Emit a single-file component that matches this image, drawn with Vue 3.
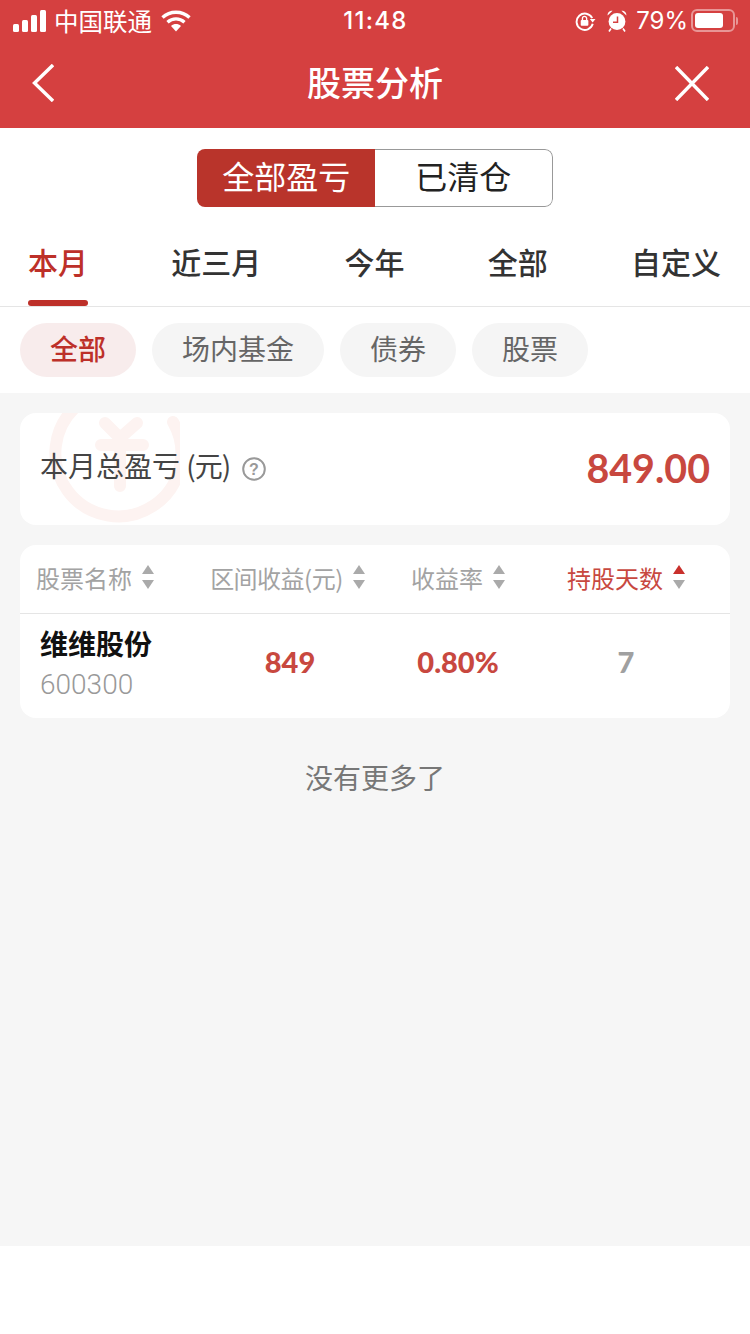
<template>
  <div class="page">
    <header class="top">
      <div class="status">
        <div class="status-left">
          <svg class="signal" width="33" height="22" viewBox="0 0 33 22">
            <rect x="0" y="14" width="6" height="8" rx="1.5" />
            <rect x="9" y="10" width="6" height="12" rx="1.5" />
            <rect x="18" y="5" width="6" height="17" rx="1.5" />
            <rect x="27" y="0" width="6" height="22" rx="1.5" />
          </svg>
          <span class="carrier">中国联通</span>
          <svg class="wifi" width="30" height="22" viewBox="0 0 30 22">
            <path d="M1.5 7.5C9 .5 21 .5 28.5 7.5" fill="none" stroke="#fff" stroke-width="3.4" />
            <path d="M6.5 12.2C11.5 7.8 18.5 7.8 23.5 12.2" fill="none" stroke="#fff" stroke-width="3.4" />
            <path d="M10 16c3-2.6 7-2.6 10 0l-5 5.6z" fill="#fff" />
          </svg>
        </div>
        <span class="time">11:48</span>
        <div class="status-right">
          <svg class="lock" width="21" height="20" viewBox="0 0 22 20">
            <path d="M18 7A8.6 8.6 0 1 0 18.6 13" fill="none" stroke="#fff" stroke-width="2" />
            <path d="M15.5 8h6l-3 3.6z" fill="#fff" />
            <rect x="6" y="9" width="8" height="6" rx="1" fill="#fff" />
            <path d="M7.8 9V7.4a2.2 2.2 0 0 1 4.4 0V9" fill="none" stroke="#fff" stroke-width="1.4" />
          </svg>
          <svg class="alarm" width="20" height="22" viewBox="0 0 20 22">
            <circle cx="10" cy="11.5" r="8.4" fill="#fff" />
            <path d="M10.5 6.5v5.8H6" fill="none" stroke="#d54040" stroke-width="1.5" />
            <path d="M.6 5.6C.4 2.6 2.6.6 5.6.8zM19.4 5.6C19.6 2.6 17.4.6 14.4.8z" fill="#fff" />
            <path d="M4 18.5l-2 3M16 18.5l2 3" fill="none" stroke="#fff" stroke-width="1.6" />
          </svg>
          <span class="percent">79%</span>
          <div class="battery"><div class="battery-fill"></div></div>
          <div class="battery-nub"></div>
        </div>
      </div>
      <nav class="nav">
        <svg class="nav-back" width="22" height="38" viewBox="0 0 22 38">
          <path d="M21 1 2.5 19 21 37" fill="none" stroke="#fff" stroke-width="3.4" />
        </svg>
        <h1 class="title">股票分析</h1>
        <svg class="nav-close" width="34" height="35" viewBox="0 0 34 35">
          <path d="M1 1l32 33M33 1 1 34" fill="none" stroke="#fff" stroke-width="3.4" />
        </svg>
      </nav>
    </header>

    <div class="segment-wrap">
      <div class="segment">
        <span class="seg on">全部盈亏</span>
        <span class="seg off">已清仓</span>
      </div>
    </div>

    <div class="tabs">
      <span v-for="(t, i) in tabs" :key="t" class="tab" :class="{ active: i === 0 }">{{ t }}</span>
    </div>

    <div class="pills">
      <span v-for="(p, i) in pills" :key="p" class="pill" :class="{ active: i === 0 }">{{ p }}</span>
    </div>

    <main class="content">
      <section class="card total">
        <svg class="mark" width="160" height="112" viewBox="0 0 160 112">
          <g fill="none" stroke="#fdf3f1" stroke-width="12" stroke-linecap="round">
            <path d="M153 9A63 63 0 1 1 58 -8" />
            <path d="M85 10 100 25 117 10M81 32H123M100 25V73" />
          </g>
        </svg>
        <div class="total-label">
          <span>本月总盈亏 <span class="unit">(元)</span></span>
          <svg width="24" height="24" viewBox="0 0 24 24">
            <circle cx="12" cy="12" r="10.8" fill="none" stroke="#999" stroke-width="2" />
            <text x="12" y="17.5" text-anchor="middle" class="q">?</text>
          </svg>
        </div>
        <strong class="total-value">849.00</strong>
      </section>

      <section class="card table">
        <div class="row head">
          <div v-for="(c, i) in columns" :key="c" class="th" :class="{ current: i === 3 }">
            <span>{{ c }}</span>
            <svg width="12" height="24" viewBox="0 0 12 24">
              <path class="up" d="M6 0l6 9H0z" />
              <path class="down" d="M6 24 0 15h12z" />
            </svg>
          </div>
        </div>
        <div class="row body">
          <div class="stock">
            <div class="stock-name">维维股份</div>
            <div class="stock-code">600300</div>
          </div>
          <div class="num red">849</div>
          <div class="num red">0.80%</div>
          <div class="num grey">7</div>
        </div>
      </section>

      <p class="more">没有更多了</p>
    </main>
  </div>
</template>

<script setup>
const tabs = ['本月', '近三月', '今年', '全部', '自定义']
const pills = ['全部', '场内基金', '债券', '股票']
const columns = ['股票名称', '区间收益(元)', '收益率', '持股天数']
</script>

<style>
html, body { margin: 0; background: #fff; }
</style>

<style scoped>
.page {
  width: 750px;
  height: 1334px;
  overflow: hidden;
  background: #fff;
  font-family: "Noto Sans CJK SC", "Noto Sans", sans-serif;
  color: #333;
}
.top { background: #d54040; color: #fff; }
.status {
  height: 40px;
  padding: 0 12px 0 13px;
  display: grid;
  grid-template-columns: 1fr auto 1fr;
  align-items: center;
}
.status-left, .status-right { display: flex; align-items: center; }
.status-right { justify-content: flex-end; }
.signal { fill: #fff; margin-right: 8px; }
.carrier { font-size: 24.5px; line-height: 40px; margin-right: 9px; }
.time { font-family: Inter, sans-serif; font-size: 24px; font-weight: 500; letter-spacing: 1.3px; }
.lock { margin-right: 11px; }
.alarm { margin-right: 9px; }
.percent { font-family: Inter, sans-serif; font-size: 24px; line-height: 40px; padding-top: 1px; margin-right: 3px; }
.battery {
  width: 44px;
  height: 23px;
  box-sizing: border-box;
  border: 2px solid rgba(255, 255, 255, 0.45);
  border-radius: 6px;
  padding: 2px;
  display: flex;
}
.battery-fill { width: 28px; background: #fff; border-radius: 3px; }
.battery-nub { width: 2px; height: 8px; margin-left: 1px; background: rgba(255, 255, 255, 0.45); border-radius: 0 2px 2px 0; }

.nav {
  height: 88px;
  padding: 0 41px;
  display: grid;
  grid-template-columns: 1fr auto 1fr;
  align-items: center;
}
.nav-back, .nav-close { margin-bottom: 2px; }
.nav-back { margin-left: -9px; }
.nav-close { justify-self: end; }
.title { margin: 0; font-size: 34px; font-weight: 500; line-height: 84px; padding-bottom: 4px; }

.segment-wrap { height: 98px; padding-top: 21px; box-sizing: border-box; display: flex; justify-content: center; }
.segment {
  width: 356px;
  height: 58px;
  border-radius: 8px;
  overflow: hidden;
  display: flex;
}
.seg { flex: 1; text-align: center; font-size: 32px; }
.seg.on { background: #b9342b; color: #fff; line-height: 52px; text-indent: 1px; }
.seg.off {
  box-sizing: border-box;
  color: #222;
  line-height: 50px;
  border: 1px solid #999;
  border-left: 0;
  border-radius: 0 8px 8px 0;
}

.tabs {
  height: 80px;
  padding: 0 29px 0 28px;
  display: flex;
  justify-content: space-between;
  border-bottom: 1px solid #e5e5e5;
}
.tab { position: relative; font-size: 30px; font-weight: 500; line-height: 71px; color: #333; }
.tab.active { color: #bd3029; }
.tab.active::after {
  content: "";
  position: absolute;
  left: 0;
  right: 0;
  bottom: 0;
  height: 6px;
  border-radius: 3px;
  background: #bd3029;
}

.pills { height: 86px; padding: 16px 20px; box-sizing: border-box; display: flex; gap: 16px; }
.pill {
  height: 54px;
  padding: 0 30px;
  border-radius: 27px;
  background: #f5f5f5;
  color: #666;
  font-size: 28px;
  line-height: 50px;
}
.pill.active { background: #f8ecec; color: #bd3029; font-weight: 500; }

.content { height: 853px; padding: 20px 20px 0; box-sizing: border-box; background: #f6f6f6; }
.card { background: #fff; border-radius: 16px; overflow: hidden; }
.total {
  position: relative;
  height: 112px;
  padding: 0 20px;
  display: flex;
  align-items: center;
  justify-content: space-between;
  margin-bottom: 20px;
}
.mark { position: absolute; left: 0; top: 0; }
.total-label {
  position: relative;
  display: flex;
  align-items: center;
  gap: 12px;
  font-size: 28px;
  line-height: 40px;
  color: #444;
  padding-bottom: 8px;
}
.unit { letter-spacing: -1px; }
.total-label svg { margin-top: 8px; }
.q { font-family: "Liberation Sans", sans-serif; font-size: 16px; font-weight: 700; fill: #999; }
.total-value { position: relative; font-family: Lato, sans-serif; font-size: 39.4px; font-weight: 700; color: #c8483f; padding-bottom: 4px; }

.row { display: grid; grid-template-columns: 186px 168px 168px 168px; }
.head { height: 69px; border-bottom: 1px solid #e5e5e5; box-sizing: border-box; align-items: center; }
.th {
  display: flex;
  align-items: center;
  justify-content: center;
  gap: 10px;
  font-size: 24px;
  color: #a3a3a3;
  white-space: nowrap;
  padding-bottom: 4px;
}
.th:first-child { justify-content: flex-start; padding-left: 16px; }
.th:nth-child(2) { letter-spacing: -0.5px; padding-right: 5px; }
.th svg { fill: #aaa; flex: none; }
.th.current { color: #c8483f; }
.th.current .up { fill: #c9302c; }
.body { height: 104px; align-items: center; }
.stock { padding: 0 0 4px 20px; }
.stock-name { font-size: 28px; font-weight: 700; line-height: 41px; color: #111; }
.stock-code { font-family: Roboto, sans-serif; font-weight: 300; font-size: 28px; line-height: 41px; color: #999; }
.num { text-align: center; font-family: Lato, sans-serif; font-size: 29px; font-weight: 900; padding-bottom: 10px; }
.red { color: #c8483f; }
.grey { color: #a0a0a0; }
.more { margin: 39px 0 0; text-align: center; font-size: 28px; line-height: 40px; color: #777; }
</style>
